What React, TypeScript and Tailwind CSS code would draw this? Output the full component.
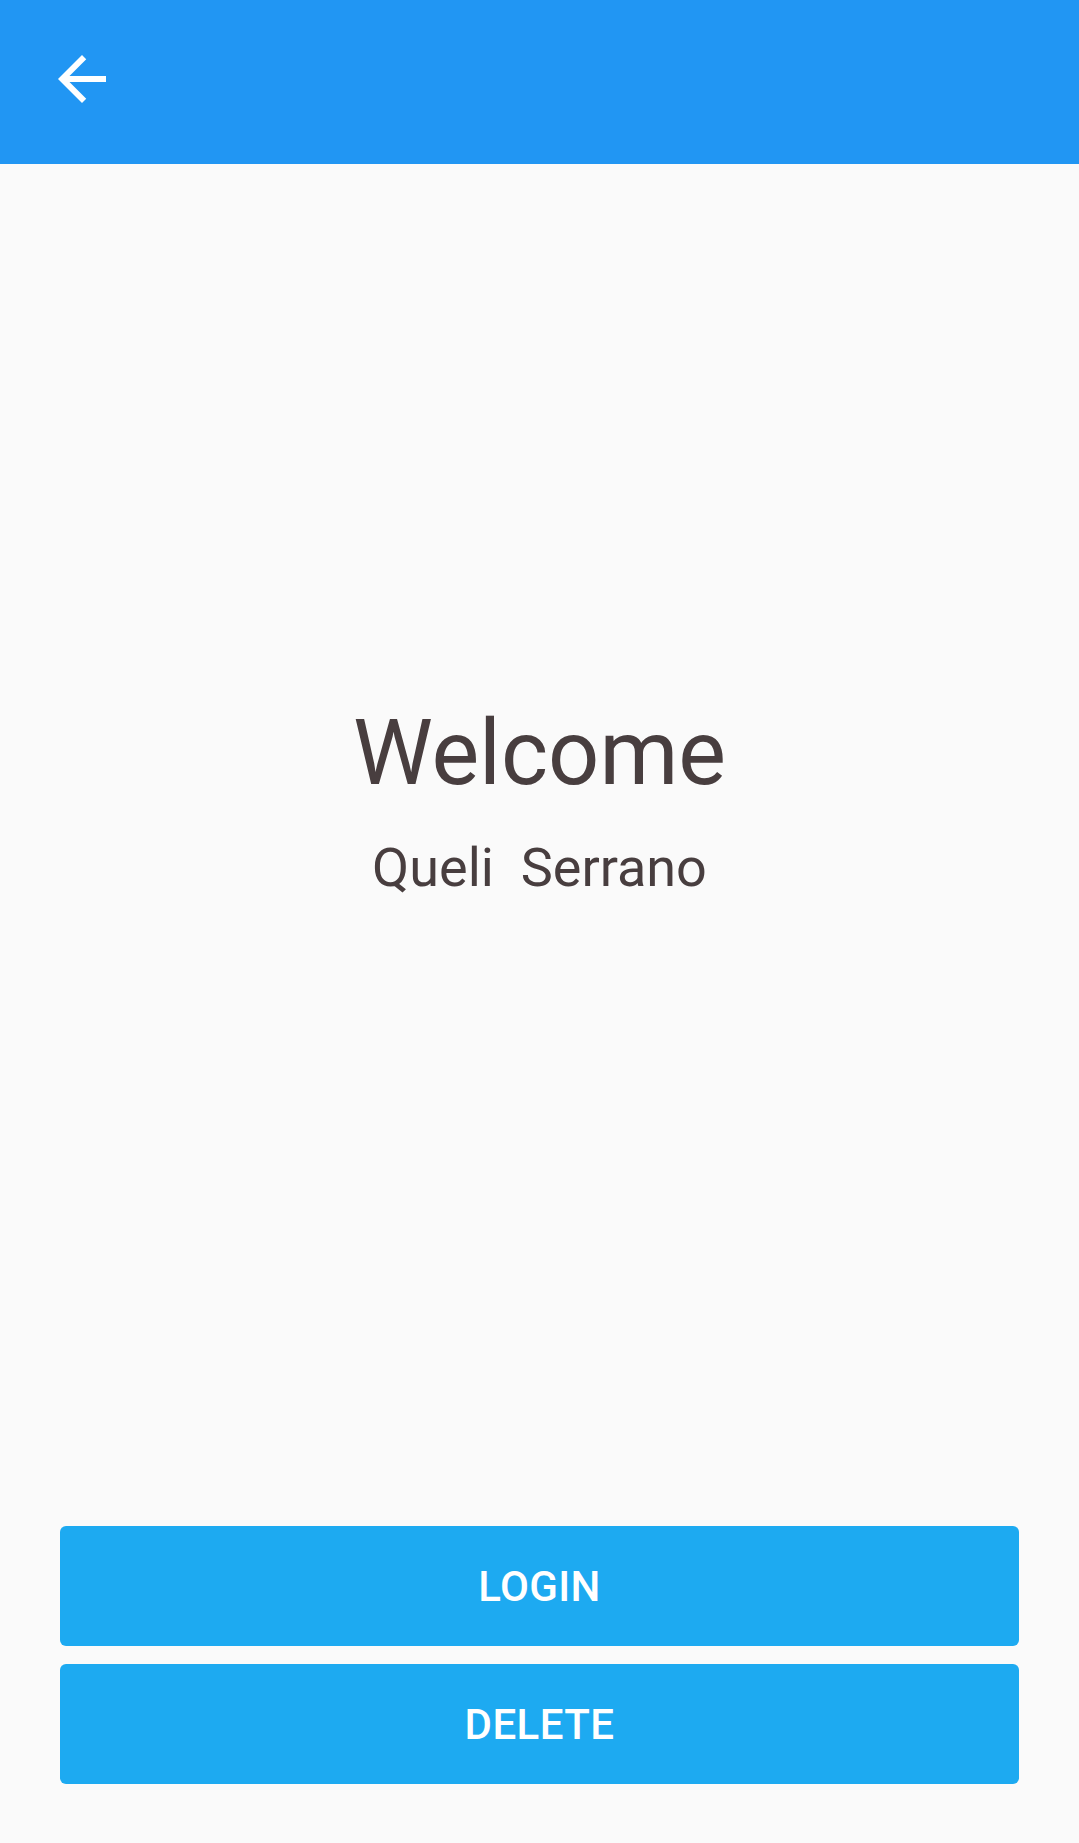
export default function App() {
  return (
    <div className="flex flex-col h-[1843px] w-full bg-[#fafafa]" style={{ fontFamily: "Roboto, 'Noto Sans', sans-serif" }}>
      <header className="h-[164px] bg-[#2196f3] shrink-0 relative">
        <svg className="absolute left-[46px] top-[43px]" width="72" height="72" viewBox="0 0 24 24" fill="#ffffff">
          <path d="M20 11H7.83l5.59-5.59L12 4l-8 8 8 8 1.41-1.41L7.83 13H20v-2z" />
        </svg>
      </header>
      <main className="flex-1 flex flex-col items-center pt-[545px]">
        <h1 className="text-[90px] leading-[90px] font-normal text-[#483e3f]">Welcome</h1>
        <p className="mt-[42px] text-[54px] leading-[54px] text-[#483e3f] whitespace-pre">Queli  Serrano</p>
      </main>
      <div className="flex flex-col gap-[18px] px-[60px] pb-[59px]">
        <button className="h-[120px] w-full rounded-[6px] bg-[#1daaf1] text-white text-[42px] font-medium tracking-[0.01em] flex items-center justify-center">LOGIN</button>
        <button className="h-[120px] w-full rounded-[6px] bg-[#1daaf1] text-white text-[42px] font-medium tracking-[0.01em] flex items-center justify-center">DELETE</button>
      </div>
    </div>
  );
}
